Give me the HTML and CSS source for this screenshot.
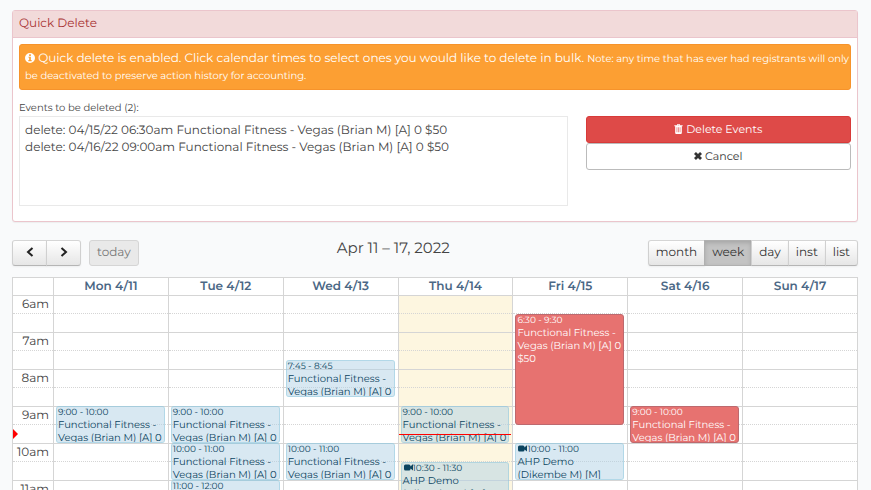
FILE: index.html
```html
<!DOCTYPE html>
<html lang="en">
<head>
<meta charset="utf-8">
<meta name="viewport" content="width=device-width, initial-scale=1">
<title>Calendar - Quick Delete</title>
<link rel="stylesheet" href="styles.css">
</head>
<body>
<!-- shared icons -->
<svg class="sprite" aria-hidden="true">
  <symbol id="icon-video" viewBox="0 0 18 14">
    <path d="M3 1h7a3 3 0 0 1 3 3v6a3 3 0 0 1-3 3H3a3 3 0 0 1-3-3V4a3 3 0 0 1 3-3zM18 1v12l-5-4v-4l4-4z"/>
  </symbol>
</svg>

<div class="page">
  <section class="panel">
    <h1 class="panel-heading">Quick Delete</h1>
    <div class="panel-body">
      <div class="alert">
        <svg class="icon icon-info" viewBox="0 0 12 12" aria-hidden="true"><path fill-rule="evenodd" d="M6 0a6 6 0 1 1 0 12A6 6 0 0 1 6 0zM5 1.500v2h2v-2zM4 4.500v1h1v3H4V10h4V8.500H7v-4z"/></svg>
        Quick delete is enabled. Click calendar times to select ones you would like to delete in bulk.
        <small>Note: any time that has ever had registrants will only be deactivated to preserve action history for accounting.</small>
      </div>
      <div class="delete-form">
        <div class="delete-list">
          <label for="events">Events to be deleted (2):</label>
          <textarea id="events" class="events-box" readonly>delete: 04/15/22 06:30am Functional Fitness - Vegas (Brian M) [A] 0 $50
delete: 04/16/22 09:00am Functional Fitness - Vegas (Brian M) [A] 0 $50</textarea>
        </div>
        <div class="delete-actions">
          <button type="button" class="btn btn-danger">
            <svg class="icon icon-trash" viewBox="0 0 10 12" aria-hidden="true"><path fill-rule="evenodd" d="M3 1.500L3.700 0h2.600L7 1.500h3v1.300H9V10.500Q9 12 7.800 12H2.200Q1 12 1 10.500V2.800H0V1.500zM4 1.500h2L5.700.8H4.300zM2.800 4v6h.7V4zM4.700 4v6h.7V4zM6.500 4v6h.7V4z"/></svg>
            Delete Events</button>
          <button type="button" class="btn btn-default">
            <svg class="icon icon-times" viewBox="0 0 9 9" aria-hidden="true"><path d="M2.200 0L4.500 2.300 6.800 0 9 2.200 6.700 4.500 9 6.800 6.800 9 4.500 6.700 2.200 9 0 6.800 2.300 4.500 0 2.200z"/></svg>
            Cancel</button>
        </div>
      </div>
    </div>
  </section>

  <div class="toolbar">
    <div class="toolbar-left">
      <div class="btn-group">
        <button type="button" class="cal-btn cal-arrow" aria-label="previous"><svg class="arrow" viewBox="0 0 8 10" aria-hidden="true"><path d="M6.500 1L2 5l4.500 4"/></svg></button>
        <button type="button" class="cal-btn cal-arrow" aria-label="next"><svg class="arrow" viewBox="0 0 8 10" aria-hidden="true"><path d="M1.500 1L6 5 1.500 9"/></svg></button>
      </div>
      <button type="button" class="cal-btn cal-today" disabled>today</button>
    </div>
    <h2 class="toolbar-title">Apr 11 – 17, 2022</h2>
    <div class="btn-group">
      <button type="button" class="cal-btn">month</button>
      <button type="button" class="cal-btn active">week</button>
      <button type="button" class="cal-btn">day</button>
      <button type="button" class="cal-btn">inst</button>
      <button type="button" class="cal-btn">list</button>
    </div>
  </div>

  <div class="calendar">
    <table class="week">
      <thead>
        <tr><th class="axis"></th><th>Mon 4/11</th><th>Tue 4/12</th><th>Wed 4/13</th><th>Thu 4/14</th><th>Fri 4/15</th><th>Sat 4/16</th><th>Sun 4/17</th></tr>
      </thead>
      <tbody>
        <tr class="hour"><td class="axis">6am</td><td></td><td></td><td></td><td class="today"></td><td></td><td></td><td></td></tr>
        <tr class="half"><td class="axis"></td><td></td><td></td><td></td><td class="today"></td><td></td><td></td><td></td></tr>
        <tr class="hour"><td class="axis">7am</td><td></td><td></td><td></td><td class="today"></td><td></td><td></td><td></td></tr>
        <tr class="half"><td class="axis"></td><td></td><td></td><td></td><td class="today"></td><td></td><td></td><td></td></tr>
        <tr class="hour"><td class="axis">8am</td><td></td><td></td><td></td><td class="today"></td><td></td><td></td><td></td></tr>
        <tr class="half"><td class="axis"></td><td></td><td></td><td></td><td class="today"></td><td></td><td></td><td></td></tr>
        <tr class="hour"><td class="axis">9am</td><td></td><td></td><td></td><td class="today"></td><td></td><td></td><td></td></tr>
        <tr class="half"><td class="axis"></td><td></td><td></td><td></td><td class="today"></td><td></td><td></td><td></td></tr>
        <tr class="hour"><td class="axis">10am</td><td></td><td></td><td></td><td class="today"></td><td></td><td></td><td></td></tr>
        <tr class="half"><td class="axis"></td><td></td><td></td><td></td><td class="today"></td><td></td><td></td><td></td></tr>
        <tr class="hour"><td class="axis">11am</td><td></td><td></td><td></td><td class="today"></td><td></td><td></td><td></td></tr>
      </tbody>
    </table>

    <!-- --start and --hours are counted in hours, 0 is 6am -->
    <div class="event-layer">
      <div class="day axis-day">
        <div class="now-arrow" style="--start: 3.75"></div>
      </div>
      <div class="day">
        <div class="event" style="--start: 3; --hours: 1"><div class="time">9:00 - 10:00</div>Functional Fitness - Vegas (Brian M) [A] 0 $50</div>
      </div>
      <div class="day">
        <div class="event" style="--start: 3; --hours: 1"><div class="time">9:00 - 10:00</div>Functional Fitness - Vegas (Brian M) [A] 0 $50</div>
        <div class="event" style="--start: 4; --hours: 1"><div class="time">10:00 - 11:00</div>Functional Fitness - Vegas (Brian M) [A] 0 $50</div>
        <div class="event" style="--start: 5; --hours: 1"><div class="time">11:00 - 12:00</div></div>
      </div>
      <div class="day">
        <div class="event" style="--start: 1.75; --hours: 1"><div class="time">7:45 - 8:45</div>Functional Fitness - Vegas (Brian M) [A] 0 $50</div>
        <div class="event" style="--start: 4; --hours: 1"><div class="time">10:00 - 11:00</div>Functional Fitness - Vegas (Brian M) [A] 0 $50</div>
      </div>
      <div class="day">
        <div class="event" style="--start: 3; --hours: 1"><div class="time">9:00 - 10:00</div>Functional Fitness - Vegas (Brian M) [A] 0 $50</div>
        <div class="event" style="--start: 4.5; --hours: 1"><div class="time"><svg class="icon icon-video" aria-hidden="true"><use href="#icon-video"/></svg>10:30 - 11:30</div>AHP Demo<br>(Dikembe M) [M]</div>
        <div class="now-line" style="--start: 3.75"></div>
      </div>
      <div class="day">
        <div class="event selected" style="--start: .5; --hours: 3"><div class="time">6:30 - 9:30</div>Functional Fitness - Vegas (Brian M) [A] 0 $50</div>
        <div class="event" style="--start: 4; --hours: 1"><div class="time"><svg class="icon icon-video" aria-hidden="true"><use href="#icon-video"/></svg>10:00 - 11:00</div>AHP Demo<br>(Dikembe M) [M]</div>
      </div>
      <div class="day">
        <div class="event selected" style="--start: 3; --hours: 1"><div class="time">9:00 - 10:00</div>Functional Fitness - Vegas (Brian M) [A] 0 $50</div>
      </div>
      <div class="day"></div>
    </div>
  </div>
</div>
</body>
</html>
```
FILE: styles.css
```css
* {
  box-sizing: border-box;
}

body {
  margin: 0;
  height: 100vh;
  overflow: hidden;
  background: #f9fafb;
  color: #444;
  font-family: Montserrat, Inter, sans-serif;
  font-size: 12px;
  line-height: 17px;
  text-rendering: geometricPrecision;
}

button,
textarea {
  font: inherit;
  color: inherit;
  text-rendering: inherit;
}

.sprite {
  display: none;
}

.icon {
  fill: currentColor;
}

.page {
  height: 100%;
  overflow: hidden;
  padding: 10px 13px 0 12px;
}

/* quick delete panel */
.panel {
  background: #fff;
  border: 1px solid #ebc5cc;
  border-radius: 3px;
  box-shadow: 0 1px 1px rgba(0, 0, 0, .05);
}

.panel-heading {
  margin: 0;
  padding: 4px 6px 5px;
  background: #f2dada;
  border-bottom: 1px solid #ebc5cc;
  color: #a83232;
  font-size: 12px;
  font-weight: 400;
}

.panel-body {
  padding: 6px 6px 15px;
}

.alert {
  padding: 5px 0 5px 5px;
  border: 1px solid #f6932b;
  border-radius: 3px;
  background: #fc9f33;
  color: #fff;
  line-height: 17px;
}

.alert small {
  font-size: 10px;
  line-height: 10px;
}

.icon-info {
  width: 10px;
  height: 10px;
  vertical-align: -1px;
}

.delete-form {
  display: grid;
  grid-template-columns: 2fr 1fr;
  margin: 9px -9px 0;
}

.delete-list,
.delete-actions {
  padding: 0 9px;
}

.delete-list label {
  display: block;
  font-size: 10px;
}

.events-box {
  display: block;
  width: 100%;
  height: 90px;
  padding: 5px;
  border: 1px solid #e9e9e9;
  border-radius: 0;
  background: #fff;
  outline: none;
  overflow: hidden;
  resize: none;
}

.delete-actions {
  padding-top: 17px;
}

.btn {
  display: block;
  width: 100%;
  height: 27px;
  padding: 0;
  border: 1px solid #bbb;
  border-radius: 3px;
  font-size: 11px;
}

.btn-danger {
  background: #de4a48;
  border-color: #d83a39;
  color: #fff;
}

.btn-default {
  background: #fff;
  color: #333;
}

.icon-trash {
  width: 9px;
  height: 10px;
  vertical-align: -1px;
}

.icon-times {
  width: 8px;
  height: 8px;
}

/* calendar toolbar */
.toolbar {
  display: flex;
  justify-content: space-between;
  align-items: flex-start;
  margin-top: 18px;
  height: 37px;
}

.toolbar-left {
  display: flex;
  gap: 8px;
}

.toolbar-title {
  margin: 0;
  font-size: 15px;
  font-weight: 400;
  line-height: 16px;
}

.btn-group {
  display: flex;
}

.cal-btn {
  height: 26px;
  padding: 0 7px 2px;
  border: 1px solid #ccc;
  border-color: #d5d5d5 #d0d0d0 #b5b5b5;
  background: linear-gradient(#fff, #e6e6e6);
  box-shadow: inset 0 1px 0 rgba(255, 255, 255, .2), 0 1px 2px rgba(0, 0, 0, .05);
  border-radius: 3px;
  color: #333;
}

.btn-group .cal-btn {
  border-radius: 0;
}

.btn-group .cal-btn + .cal-btn {
  margin-left: -1px;
}

.btn-group .cal-btn:first-child {
  border-radius: 3px 0 0 3px;
}

.btn-group .cal-btn:last-child {
  border-radius: 0 3px 3px 0;
}

.cal-btn.active {
  background: #c3c3c3;
  border-color: #b0b0b0;
  box-shadow: inset 0 2px 4px rgba(0, 0, 0, .15);
}

.cal-arrow {
  width: 35px;
}

.cal-today {
  background: #e9e9e9;
  border-color: #d5d5d5;
  box-shadow: none;
  color: #777;
}

.arrow {
  display: block;
  width: 8px;
  height: 10px;
  margin: 0 auto;
  fill: none;
  stroke: #222;
  stroke-width: 2;
}

/* week grid */
.calendar {
  position: relative;
}

.week {
  width: 100%;
  table-layout: fixed;
  border-collapse: collapse;
  background: #fff;
}

.week th,
.week td {
  height: 18px;
  padding: 0;
  border: 1px solid #d5d5d5;
  line-height: 16px;
}

.week th {
  color: #4a6785;
  font-size: 12px;
  font-weight: 600;
}

.week .axis {
  width: 41px;
  padding-right: 4px;
  text-align: right;
}

.week .hour td {
  border-bottom-style: dotted;
}

.week .half td {
  height: 19px;
  border-top-style: dotted;
}

.week .today {
  background: #fdf6e0;
}

/* events lie over the slots, one column for each day */
.event-layer {
  position: absolute;
  top: 18px;
  left: 0;
  right: 1px;
  bottom: 0;
  display: grid;
  grid-template-columns: 41px repeat(7, 1fr);
}

.day {
  position: relative;
}

.event {
  position: absolute;
  top: calc(var(--start) * 37px);
  left: 3px;
  right: 3px;
  height: calc(var(--hours) * 37px);
  padding: 0 1px;
  border: 1px solid rgba(145, 200, 222, .7);
  border-radius: 3px;
  background: rgba(178, 210, 230, .5);
  background-clip: padding-box;
  color: #0b4460;
  font-size: 10px;
  line-height: 13px;
  overflow: hidden;
}

.event .time {
  font-size: 9px;
  line-height: 11px;
}

.event.selected {
  background: #e77270;
  border-color: #bd696e;
  color: #fff;
}

.icon-video {
  width: 9px;
  height: 7px;
  margin-left: 1px;
}

.now-line {
  position: absolute;
  top: calc(var(--start) * 37px);
  left: 1px;
  right: 1px;
  border-top: 1px solid #f00;
}

.now-arrow {
  position: absolute;
  top: calc(var(--start) * 37px - 5px);
  left: 1px;
  border: solid transparent;
  border-width: 5px 0 5px 5px;
  border-left-color: #f00;
}
```
